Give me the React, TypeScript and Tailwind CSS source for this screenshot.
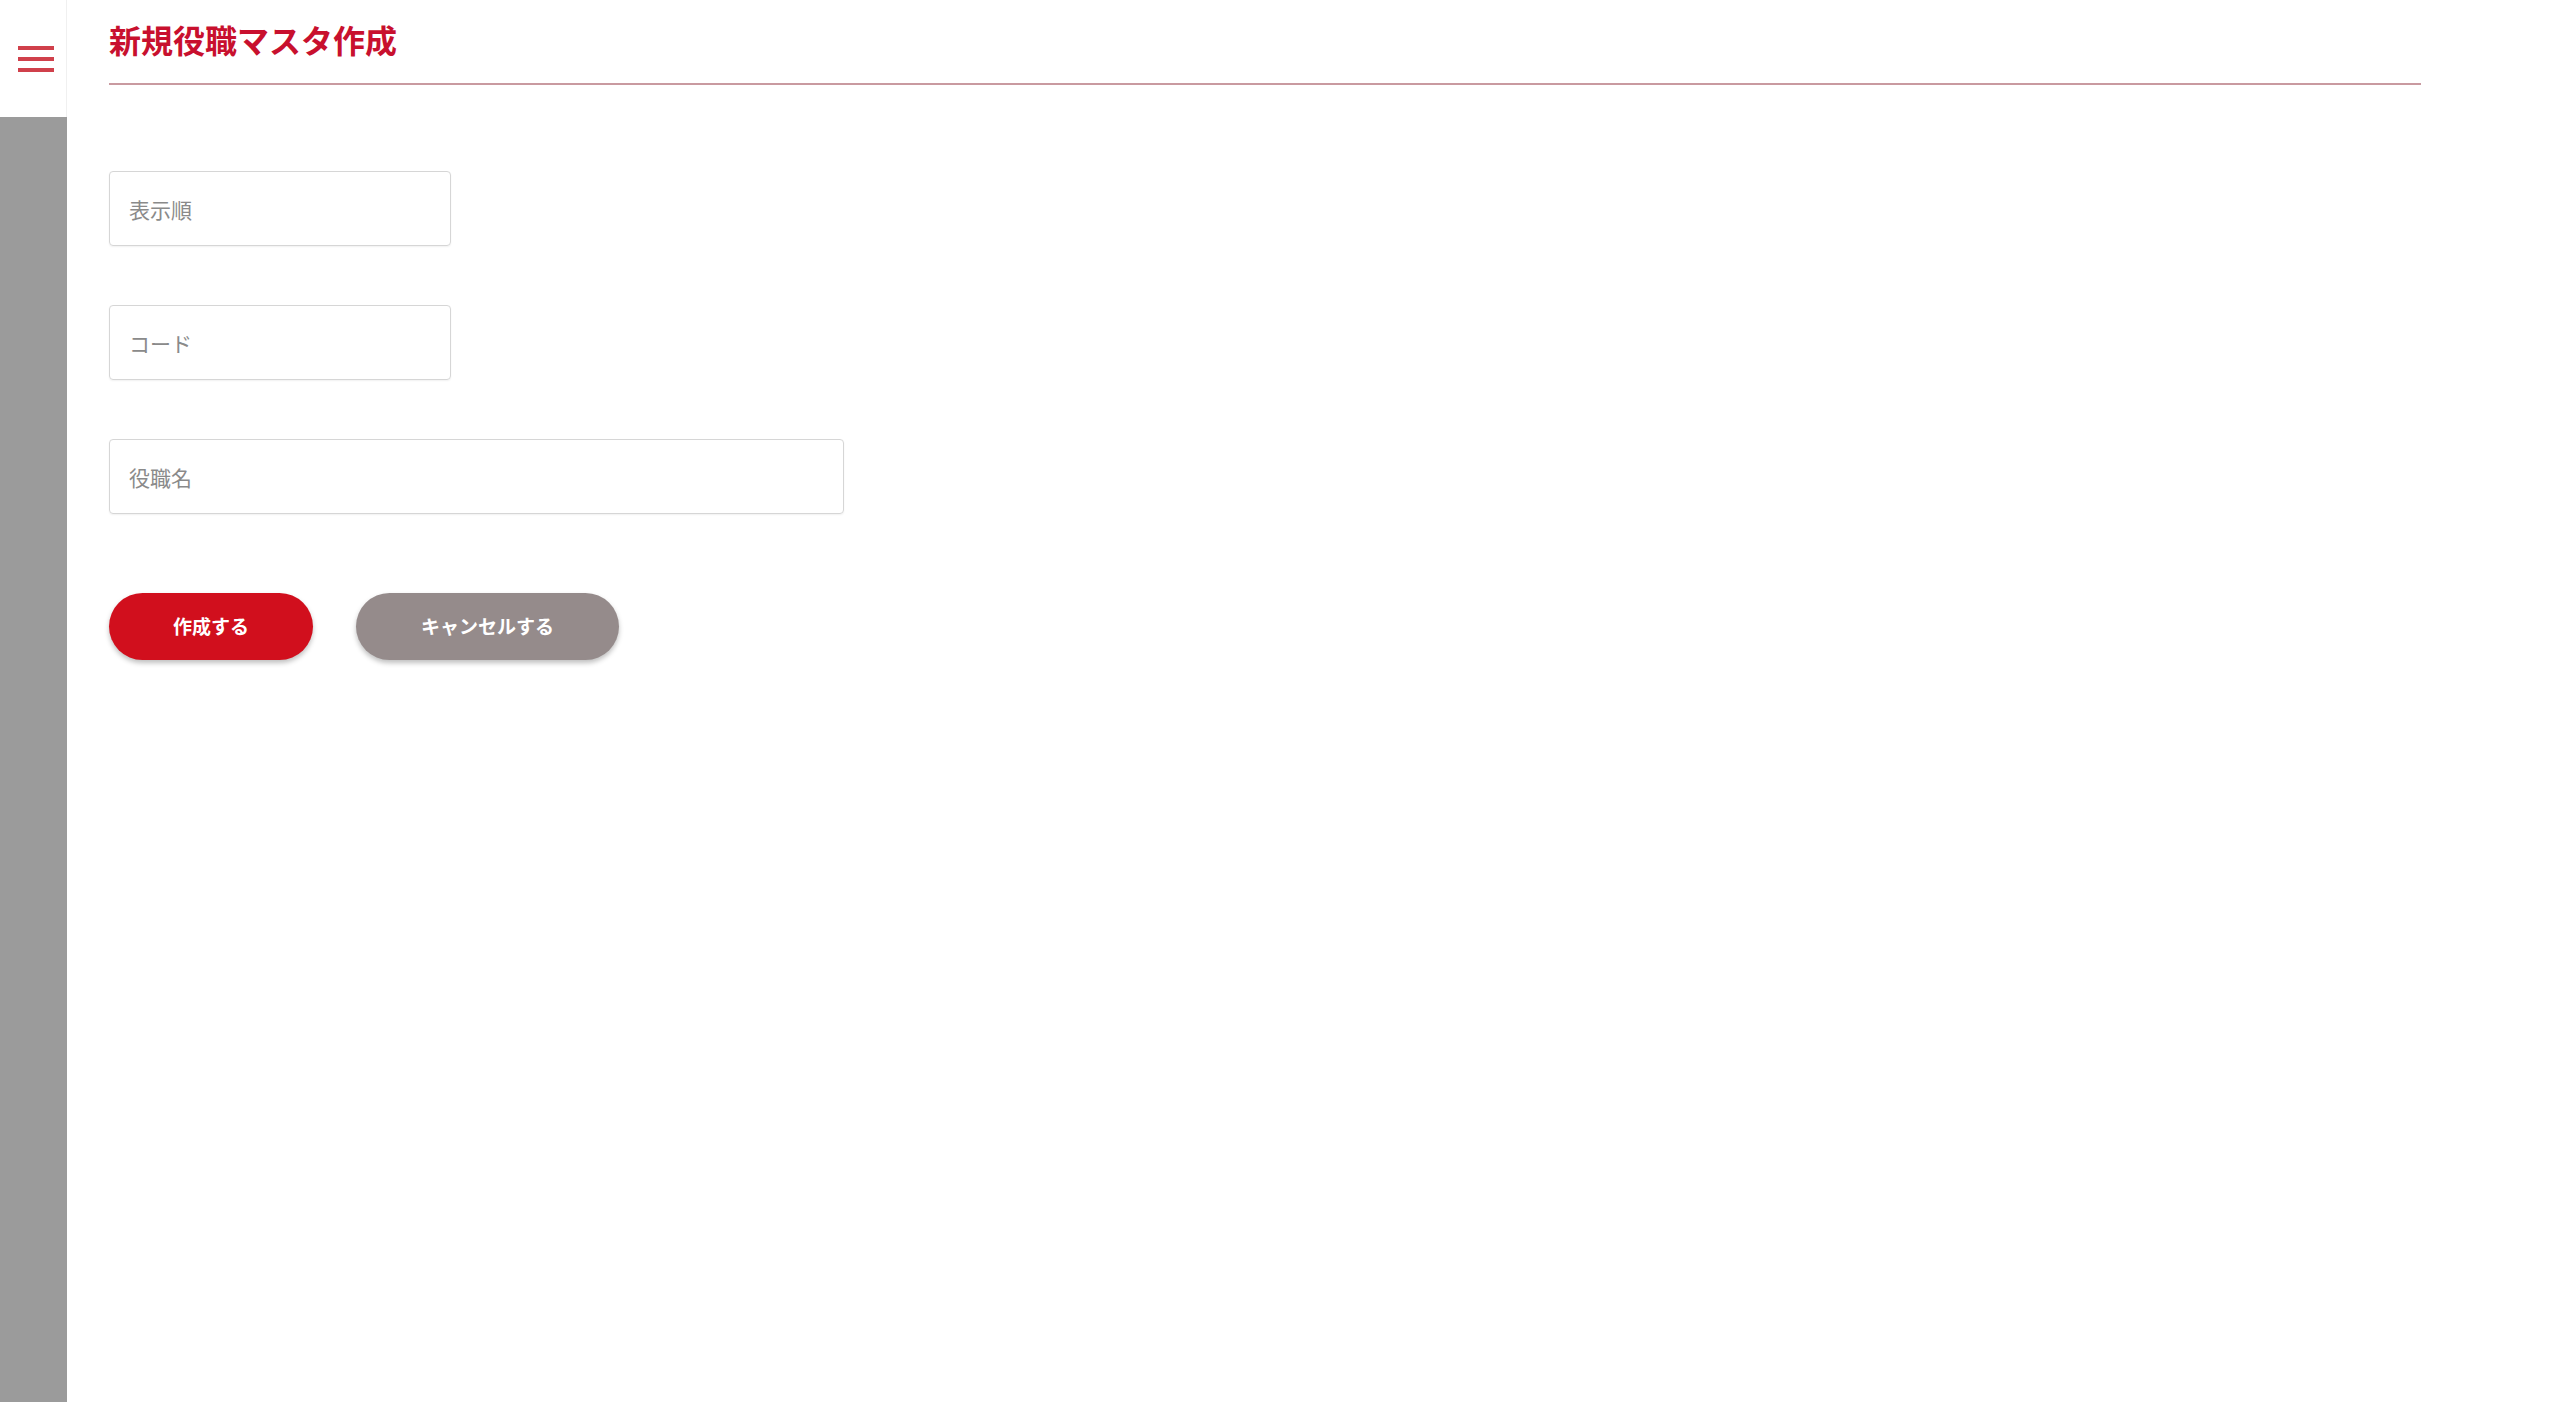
import React from "react";

export default function App() {
  return (
    <div
      className="flex min-h-[1402px] w-full bg-white"
      style={{ fontFamily: '"Noto Sans CJK JP", "Noto Sans", sans-serif' }}
    >
      <aside className="flex w-[67px] shrink-0 flex-col">
        <div className="flex h-[117px] items-start border-r border-[#f0f0f0] bg-white pt-[46px] pl-[18px]">
          <div className="flex w-[36px] flex-col gap-[7px]">
            <span className="block h-[4px] w-full bg-[#d0404b]" />
            <span className="block h-[4px] w-full bg-[#d0404b]" />
            <span className="block h-[4px] w-full bg-[#d0404b]" />
          </div>
        </div>
        <div className="flex-1 bg-[#9b9b9b]" />
      </aside>
      <main className="ml-[42px] w-[2312px]">
        <div className="border-b-2 border-[#c99aa0] pt-[17px] pb-[22px]">
          <h1 className="text-[32px] leading-[44px] font-bold text-[#c8102e]">
            新規役職マスタ作成
          </h1>
        </div>
        <form className="mt-[86px] flex flex-col gap-[59px]">
          <input
            placeholder="表示順"
            className="h-[75px] w-[342px] rounded-[4px] border border-[#d6d6d6] px-[19px] text-[21px] text-[#444] shadow-[0_1px_2px_rgba(0,0,0,0.06)] outline-none placeholder:text-[#8a8a8a]"
          />
          <input
            placeholder="コード"
            className="h-[75px] w-[342px] rounded-[4px] border border-[#d6d6d6] px-[19px] text-[21px] text-[#444] shadow-[0_1px_2px_rgba(0,0,0,0.06)] outline-none placeholder:text-[#8a8a8a]"
          />
          <input
            placeholder="役職名"
            className="h-[75px] w-[735px] rounded-[4px] border border-[#d6d6d6] px-[19px] text-[21px] text-[#444] shadow-[0_1px_2px_rgba(0,0,0,0.06)] outline-none placeholder:text-[#8a8a8a]"
          />
        </form>
        <div className="mt-[79px] flex gap-[43px]">
          <button
            type="button"
            className="h-[67px] w-[204px] rounded-full bg-[#d10f1d] text-[19px] font-bold text-white shadow-[0_3px_5px_rgba(0,0,0,0.25)]"
          >
            作成する
          </button>
          <button
            type="button"
            className="h-[67px] w-[263px] rounded-full bg-[#958b8b] text-[19px] font-bold text-white shadow-[0_3px_5px_rgba(0,0,0,0.25)]"
          >
            キャンセルする
          </button>
        </div>
      </main>
    </div>
  );
}
